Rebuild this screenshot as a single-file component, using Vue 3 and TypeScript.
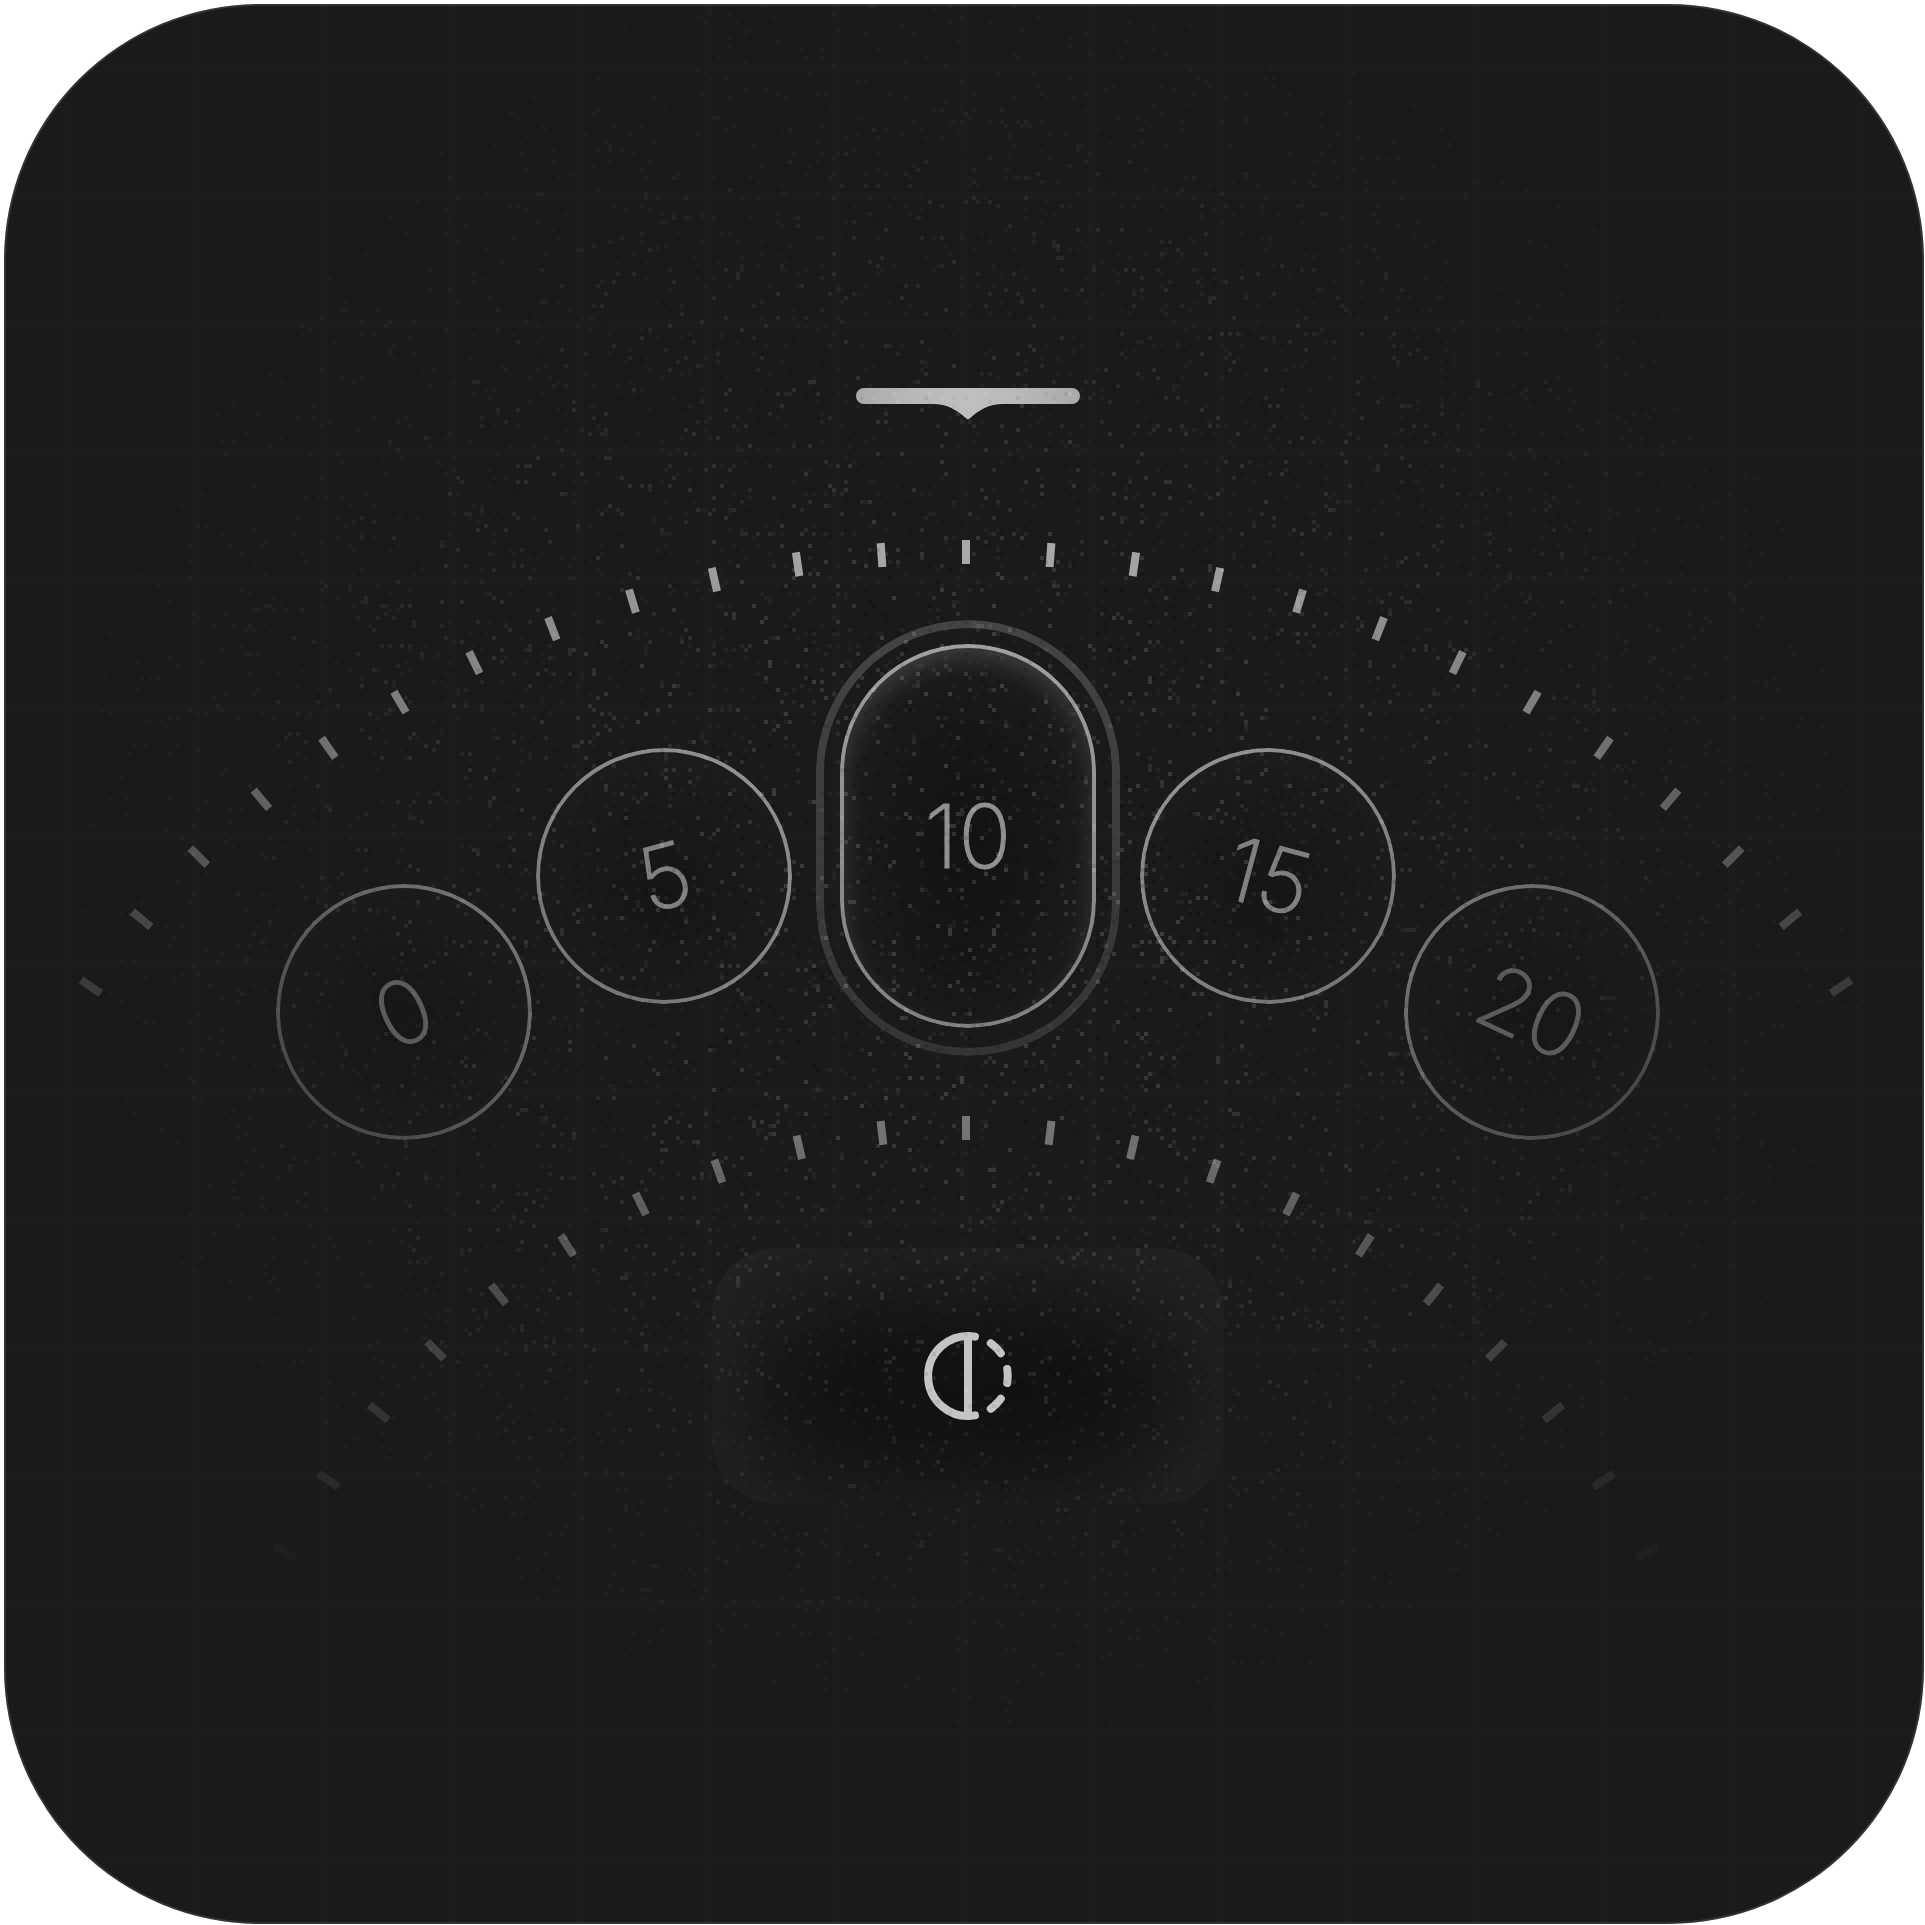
<script setup lang="ts">
import { onMounted, ref } from 'vue'

interface Stop {
  value: number
  tilt: number
  // Where the light source sits, measured from the top left of the stop
  lightX: number
  lightY: number
  level: string
}

const leftStops: Stop[] = [
  { value: 0, tilt: -25, lightX: 692, lightY: -488, level: 'outer' },
  { value: 5, tilt: -15, lightX: 432, lightY: -352, level: 'inner' },
]
const centerStop: Stop = { value: 10, tilt: 0, lightX: 128, lightY: -248, level: 'center' }
const rightStops: Stop[] = [
  { value: 15, tilt: 15, lightX: -172, lightY: -352, level: 'inner' },
  { value: 20, tilt: 25, lightX: -436, lightY: -488, level: 'outer' },
]

const selected = ref<number>(10)
const grain = ref<HTMLCanvasElement | null>(null)

// Line of 24 units through (x, y), turned clockwise from upright by the angle in radians
function tickPath(x: number, y: number, angle: number): string {
  const dx = 12 * Math.sin(angle)
  const dy = 12 * Math.cos(angle)
  return `M${x + dx} ${y - dy}L${x - dx} ${y + dy}`
}

// Ticks at equal distances along the top of an ellipse, mirrored around its axis
function arcTicks(cx: number, top: number, a: number, b: number, step: number, count: number): string {
  let path = tickPath(cx, top, 0)
  let travelled = 0
  let placed = 0
  const dt = 0.0005
  for (let t = 0; placed < count; t += dt) {
    travelled += Math.hypot(a * Math.cos(t), b * Math.sin(t)) * dt
    if (travelled >= step * (placed + 1)) {
      const dx = a * Math.sin(t)
      const y = top + b * (1 - Math.cos(t))
      const angle = Math.atan2(Math.sin(t) / a, Math.cos(t) / b)
      path += tickPath(cx - dx, y, -angle) + tickPath(cx + dx, y, angle)
      placed += 1
    }
  }
  return path
}

const upperTicks = arcTicks(962, 548, 1019, 891, 84.7, 12)
const lowerTicks = arcTicks(962, 1124, 787, 851, 84.3, 10)

function lightVars(stop: Stop) {
  return {
    '--light-x': `${stop.lightX}px`,
    '--light-y': `${stop.lightY}px`,
    '--tilt': `${stop.tilt}deg`,
  }
}

function createRandom(seed: number): () => number {
  let state = seed
  return () => {
    state = (state + 0x6d2b79f5) | 0
    let t = Math.imul(state ^ (state >>> 15), 1 | state)
    t = (t + Math.imul(t ^ (t >>> 7), 61 | t)) ^ t
    return ((t ^ (t >>> 14)) >>> 0) / 4294967296
  }
}

function drawGrain(canvas: HTMLCanvasElement) {
  const ctx = canvas.getContext('2d')
  if (!ctx) return
  const random = createRandom(7)
  for (let y = 0; y < 480; y++) {
    for (let x = 0; x < 480; x++) {
      const kind = random()
      const strength = random()
      const fade = Math.min(1, Math.max(0, 1.3 - Math.hypot(x - 241, y - 212) / 185))
      if (fade === 0) continue
      if (kind < 0.028) ctx.fillStyle = `rgba(255,255,255,${(0.08 + 0.08 * strength) * fade})`
      else if (kind < 0.09) ctx.fillStyle = `rgba(255,255,255,${0.06 * strength * fade})`
      else if (kind < 0.17) ctx.fillStyle = `rgba(0,0,0,${0.14 * strength * fade})`
      else continue
      ctx.fillRect(x, y, 1, 1)
    }
  }
}

onMounted(() => {
  if (grain.value) drawGrain(grain.value)
})
</script>

<template>
  <main class="page">
    <section class="card" aria-label="Contrast dial">
      <svg class="arcs" viewBox="0 0 1920 1920" aria-hidden="true">
        <defs>
          <radialGradient id="upper-light" gradientUnits="userSpaceOnUse" cx="964" cy="392" r="1340">
            <stop offset="0" stop-color="#bbbbbb" />
            <stop offset="0.12" stop-color="#a8a8a8" />
            <stop offset="0.47" stop-color="#808080" />
            <stop offset="0.71" stop-color="#4a4a4a" />
            <stop offset="0.8" stop-color="#383838" />
            <stop offset="1" stop-color="#202020" />
          </radialGradient>
          <radialGradient id="lower-light" gradientUnits="userSpaceOnUse" cx="964" cy="392" r="1340">
            <stop offset="0.5" stop-color="#7e7e7e" />
            <stop offset="0.61" stop-color="#686868" />
            <stop offset="0.7" stop-color="#565656" />
            <stop offset="0.82" stop-color="#404040" />
            <stop offset="0.88" stop-color="#333333" />
            <stop offset="0.95" stop-color="#282828" />
            <stop offset="1" stop-color="#1f1f1f" />
          </radialGradient>
        </defs>
        <path :d="upperTicks" stroke="url(#upper-light)" stroke-width="8" />
        <path :d="lowerTicks" stroke="url(#lower-light)" stroke-width="8" />
      </svg>

      <svg class="pointer" viewBox="0 0 224 32" aria-hidden="true">
        <defs>
          <radialGradient id="pointer-fill" gradientUnits="userSpaceOnUse" cx="112" cy="12" r="112">
            <stop offset="0" stop-color="#c0c0c0" />
            <stop offset="0.5" stop-color="#b8b8b8" />
            <stop offset="1" stop-color="#aaaaaa" />
          </radialGradient>
        </defs>
        <path
          fill="url(#pointer-fill)"
          d="M8 0H216A8 8 0 0 1 216 16H147C133 16 123 22 114 30.300Q112 32 110 30.300C101 22 91 16 77 16H8A8 8 0 0 1 8 0Z"
        />
      </svg>

      <div class="dial">
        <div class="side side-left">
          <button
            v-for="stop in leftStops"
            :key="stop.value"
            type="button"
            class="stop"
            :class="stop.level"
            :style="lightVars(stop)"
            :aria-pressed="selected === stop.value"
            @click="selected = stop.value"
          >
            <span class="value">{{ stop.value }}</span>
          </button>
        </div>
        <div class="ring">
          <button
            type="button"
            class="stop"
            :class="centerStop.level"
            :style="lightVars(centerStop)"
            :aria-pressed="selected === centerStop.value"
            @click="selected = centerStop.value"
          >
            <span class="value">{{ centerStop.value }}</span>
          </button>
        </div>
        <div class="side side-right">
          <button
            v-for="stop in rightStops"
            :key="stop.value"
            type="button"
            class="stop"
            :class="stop.level"
            :style="lightVars(stop)"
            :aria-pressed="selected === stop.value"
            @click="selected = stop.value"
          >
            <span class="value">{{ stop.value }}</span>
          </button>
        </div>
      </div>

      <button type="button" class="mode" aria-label="Contrast">
        <svg class="mode-icon" viewBox="0 0 24 24" aria-hidden="true">
          <path d="M13.750 2.150A10 10 0 1 0 13.750 21.850" />
          <path d="M12 2V22" />
          <path d="M17.700 3.800A10 10 0 0 1 20.200 6.300" />
          <path d="M21.800 10.250A10 10 0 0 1 21.800 13.750" />
          <path d="M20.200 17.700A10 10 0 0 1 17.700 20.200" />
        </svg>
      </button>

      <canvas ref="grain" class="grain" width="480" height="480" aria-hidden="true"></canvas>
    </section>
  </main>
</template>

<style>
body {
  margin: 0;
  background: #ffffff;
}
</style>

<style scoped>
.page {
  padding: 4px 1px 1px 4px;
  font-family: Inter, "Liberation Sans", sans-serif;
}

.card {
  position: relative;
  box-sizing: border-box;
  display: flex;
  flex-direction: column;
  align-items: center;
  padding: 384px 0 420px 8px;
  overflow: hidden;
  border-radius: 256px;
  background-color: #1a1a1a;
  background-image:
    linear-gradient(to right, #1c1c1c 8px, transparent 8px),
    linear-gradient(to bottom, #1c1c1c 8px, transparent 8px);
  background-size: 128px 128px;
  background-position: 60px 60px;
  box-shadow: inset 0 0 0 2px #333333;
}

.arcs,
.grain {
  position: absolute;
  top: 0;
  left: 50%;
  width: 1920px;
  height: 1920px;
  margin-left: -960px;
  pointer-events: none;
}

.grain {
  image-rendering: pixelated;
}

.pointer {
  display: block;
  width: 224px;
  height: 32px;
}

.dial {
  display: flex;
  align-items: flex-start;
  height: 520px;
  margin-top: 200px;
  margin-bottom: 108px;
}

.side {
  display: flex;
  align-items: flex-start;
}

.side-left {
  gap: 4px;
  margin-right: 24px;
}

.side-right {
  gap: 8px;
  margin-left: 20px;
}

.stop {
  position: relative;
  display: flex;
  flex: none;
  align-items: center;
  justify-content: center;
  width: 256px;
  height: 256px;
  padding: 0;
  border: 0;
  border-radius: 128px;
  font-family: inherit;
  font-size: 88px;
  font-weight: 200;
  line-height: 104px;
  -webkit-text-stroke: 1px currentColor;
  cursor: pointer;
}

.stop::after {
  content: "";
  position: absolute;
  inset: 0;
  border: 4px solid transparent;
  border-radius: 128px;
  background: radial-gradient(
      circle 1340px at var(--light-x) var(--light-y),
      #bbbbbb 0,
      #a8a8a8 12%,
      #808080 47%,
      #4a4a4a 71%,
      #383838 80%,
      #202020 100%
    )
    border-box;
  mask: linear-gradient(#000 0 0) padding-box, linear-gradient(#000 0 0) border-box;
  mask-composite: exclude;
}

.inner {
  margin-top: 128px;
  background: radial-gradient(circle at 50% 56%, #161616 10%, #1a1a1a 56%, #1d1d1d 80%);
  color: #808080;
}

.outer {
  margin-top: 264px;
  background: radial-gradient(circle at 50% 52%, #171717 10%, #1a1a1a 56%, #1c1c1c 80%);
  color: #5c5c5c;
}

.ring {
  position: relative;
  box-sizing: border-box;
  width: 304px;
  height: 436px;
  padding: 24px;
  border-radius: 152px;
}

.ring::before {
  content: "";
  position: absolute;
  inset: 0;
  border: 8px solid transparent;
  border-radius: 152px;
  background: linear-gradient(#444444, #343434) border-box;
  mask: linear-gradient(#000 0 0) padding-box, linear-gradient(#000 0 0) border-box;
  mask-composite: exclude;
}

.center {
  height: 384px;
  background: radial-gradient(ellipse 128px 224px at 50% 54%, #131313 10%, #171717 60%, #1b1b1b 100%);
  box-shadow:
    inset 0 12px 24px rgba(255, 255, 255, 0.14),
    inset 0 16px 64px rgba(255, 255, 255, 0.04);
  color: #909090;
}

.value {
  transform: rotate(var(--tilt));
}

.mode {
  display: flex;
  align-items: center;
  justify-content: center;
  width: 512px;
  height: 256px;
  padding: 0;
  border: 0;
  border-radius: 64px;
  background: #101010;
  box-shadow: inset 0 16px 160px rgba(255, 255, 255, 0.12);
  cursor: pointer;
}

.mode-icon {
  width: 96px;
  height: 96px;
  fill: none;
  stroke: #c4c4c4;
  stroke-width: 2;
  stroke-linecap: round;
}
</style>
